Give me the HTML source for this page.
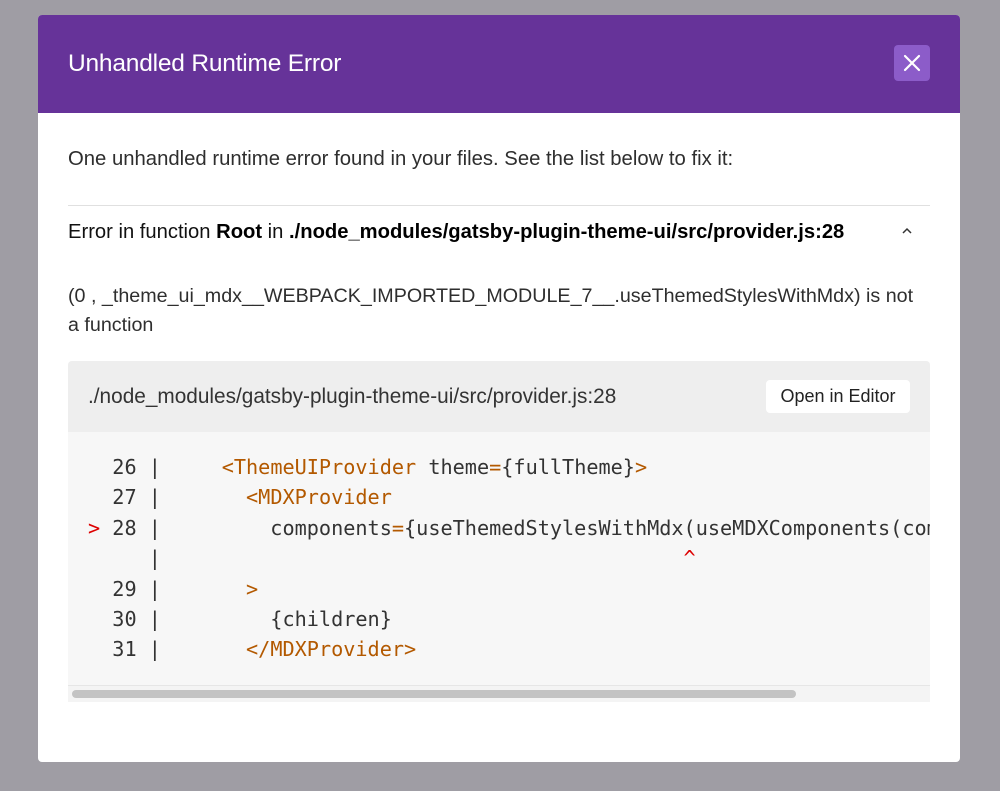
<!DOCTYPE html>
<html><head><meta charset="utf-8"><style>
*{box-sizing:border-box;margin:0;padding:0}
body{width:1000px;height:791px;background:#9f9da4;font-family:"Liberation Sans",sans-serif;position:relative;overflow:hidden}
.modal{position:absolute;left:38px;top:15px;width:922px;height:747px;background:#fff;border-radius:4px;overflow:hidden}
.hd{height:98px;background:#663399;position:relative}
.hd h1{position:absolute;left:30px;top:35px;font-size:24.5px;font-weight:normal;color:#fff;letter-spacing:-0.2px}
.x{position:absolute;left:856px;top:30px;width:36px;height:36px;background:#8c5cc9;border-radius:4px}
.t{position:absolute;left:30px;font-size:20.2px;color:#2e2e2e;white-space:nowrap}
.hr{position:absolute;left:30px;top:190px;width:862px;height:1px;background:#e0e0e0}
.box{position:absolute;left:30px;top:346px;width:862px;height:341px;background:#f7f7f7;border-radius:4px 4px 0 0;overflow:hidden}
.bh{height:71px;background:#eeeeee;position:relative}
.bh span{position:absolute;left:20px;top:24px;font-size:20.8px;color:#333}
.btn{position:absolute;left:698px;top:19px;width:144px;height:33px;background:#fff;border-radius:4px;font-size:18px;color:#222;text-align:center;line-height:33px}
pre{position:absolute;left:20px;top:91px;font-family:"DejaVu Sans Mono",monospace;font-size:20.2px;line-height:30.4px;color:#333}
.o{color:#b35900}.r{color:#d00}
.sb{position:absolute;left:0;top:324px;width:862px;height:17px;background:#f4f4f4;border-top:1px solid #e6e6e6}
.sb div{position:absolute;left:4px;top:4px;width:724px;height:8px;background:#c3c3c3;border-radius:4px}
</style></head><body>
<div class="modal">
<div class="hd"><h1>Unhandled Runtime Error</h1>
<div class="x"><svg width="36" height="36"><path d="M11 11L25 25M25 11L11 25" stroke="#fff" stroke-width="2.2" stroke-linecap="round"/></svg></div></div>
<div class="t" style="top:133px;font-size:20.3px">One unhandled runtime error found in your files. See the list below to fix it:</div>
<div class="hr"></div>
<div class="t" style="top:206px;color:#111">Error in function <b style="color:#000">Root</b> in <b style="color:#000">./node_modules/gatsby-plugin-theme-ui/src/provider.js:28</b></div>
<svg style="position:absolute;left:863px;top:210px" width="12" height="12"><path d="M2 8L6 4L10 8" stroke="#333" stroke-width="1.5" fill="none"/></svg>
<div class="t" style="top:270px;font-size:19.7px">(0 , _theme_ui_mdx__WEBPACK_IMPORTED_MODULE_7__.useThemedStylesWithMdx) is not</div>
<div class="t" style="top:299px;font-size:19.7px">a function</div>
<div class="box">
<div class="bh"><span>./node_modules/gatsby-plugin-theme-ui/src/provider.js:28</span><div class="btn">Open in Editor</div></div>
<pre>  26 |     <span class="o">&lt;ThemeUIProvider</span> theme<span class="o">=</span>{fullTheme}<span class="o">&gt;</span>
  27 |       <span class="o">&lt;MDXProvider</span>
<span class="r">&gt;</span> 28 |         components<span class="o">=</span>{useThemedStylesWithMdx(useMDXComponents(components))}
     |                                           <span class="r">^</span>
  29 |       <span class="o">&gt;</span>
  30 |         {children}
  31 |       <span class="o">&lt;/MDXProvider&gt;</span></pre>
<div class="sb"><div></div></div>
</div>
</div>
</body></html>
